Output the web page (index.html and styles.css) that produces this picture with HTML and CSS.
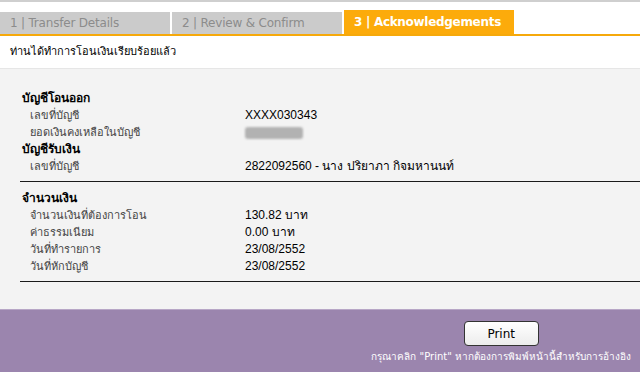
FILE: index.html
```html
<!DOCTYPE html>
<html>
<head>
    <title>Acknowledgements</title>
    <link rel="stylesheet" href="styles.css">
</head>
<body>
    <div class="top-line"></div>
    <div class="tabs">
        <div class="tab">1 | Transfer Details</div>
        <div class="tab">2 | Review &amp; Confirm</div>
        <div class="tab active">3 | Acknowledgements</div>
    </div>

    <div class="message">ท่านได้ทำการโอนเงินเรียบร้อยแล้ว</div>

    <div class="details">
        <div class="section">
            <div class="heading">บัญชีโอนออก</div>
            <div class="row"><span class="label">เลขที่บัญชี</span><span class="value">XXXX030343</span></div>
            <div class="row"><span class="label">ยอดเงินคงเหลือในบัญชี</span><span class="value"><span class="hidden-amount"></span></span></div>
            <div class="heading">บัญชีรับเงิน</div>
            <div class="row"><span class="label">เลขที่บัญชี</span><span class="value">2822092560 - นาง ปริยาภา กิจมหานนท์</span></div>
        </div>
        <div class="section">
            <div class="heading">จำนวนเงิน</div>
            <div class="row"><span class="label">จำนวนเงินที่ต้องการโอน</span><span class="value">130.82 บาท</span></div>
            <div class="row"><span class="label">ค่าธรรมเนียม</span><span class="value">0.00 บาท</span></div>
            <div class="row"><span class="label">วันที่ทำรายการ</span><span class="value">23/08/2552</span></div>
            <div class="row"><span class="label">วันที่หักบัญชี</span><span class="value">23/08/2552</span></div>
        </div>
    </div>

    <div class="footer">
        <div class="print-box">
            <button class="print-button" onclick="window.print()">Print</button>
            <p class="print-note">กรุณาคลิก "Print" หากต้องการพิมพ์หน้านี้สำหรับการอ้างอิง</p>
        </div>
    </div>
</body>
</html>
```

FILE: styles.css
```css
body {
    font-family: Tahoma, "DejaVu Sans", "Noto Sans", sans-serif;
    font-size: 11px;
    background-color: #fff;
    margin: 0;
    padding: 0;
    color: #000;
}

.top-line {
    height: 2px;
    background-color: #cfcfcf;
}

.tabs {
    display: flex;
    align-items: flex-end;
    gap: 2px;
    margin-top: 8px;
    border-bottom: 2px solid #f6a90b;
}

.tab {
    width: 160px;
    height: 22px;
    line-height: 23px;
    padding-left: 10px;
    background-color: #cbcbcb;
    color: #8c8c8c;
    font-family: "DejaVu Sans", sans-serif;
    font-size: 12px;
    letter-spacing: -0.2px;
}

.tab.active {
    height: 24px;
    line-height: 24px;
    background-color: #fcab0b;
    color: #fff;
    font-weight: bold;
    letter-spacing: -0.3px;
}

.message {
    height: 32px;
    line-height: 32px;
    padding-left: 10px;
    border-bottom: 1px solid #e6e6e6;
}

.details {
    height: 240px;
    background-color: #f3f3f3;
    padding-top: 21px;
    padding-left: 20px;
    box-sizing: border-box;
}

.section {
    border-bottom: 1px solid #1a1a1a;
    padding-bottom: 6px;
    margin-bottom: 8px;
}

.heading {
    height: 17px;
    line-height: 17px;
    padding-left: 2px;
    font-size: 12px;
    font-weight: bold;
}

.row {
    display: grid;
    grid-template-columns: 215px 1fr;
    height: 17px;
    line-height: 17px;
    padding-left: 10px;
}

.label {
    color: #444;
}

.value {
    font-family: "Liberation Sans", Arial, sans-serif;
    font-size: 12px;
}

.hidden-amount {
    display: inline-block;
    width: 58px;
    height: 12px;
    margin-top: 3px;
    background-color: #b2b2b2;
    border-radius: 3px;
    vertical-align: top;
    filter: blur(1px);
}

.footer {
    height: 63px;
    background-color: #9b85ae;
    border-top: 1px solid #b7a6c6;
    display: flex;
    justify-content: flex-end;
    padding-right: 9px;
    box-sizing: border-box;
}

.print-box {
    display: flex;
    flex-direction: column;
    align-items: center;
    padding-top: 11px;
}

.print-button {
    width: 75px;
    height: 25px;
    border: 1px solid #333;
    border-radius: 4px;
    background: linear-gradient(#ffffff, #ececec);
    font-family: "DejaVu Sans", sans-serif;
    font-size: 12px;
    cursor: pointer;
}

.print-note {
    margin: 3px 0 0;
    color: #fff;
    font-size: 10px;
}
```
